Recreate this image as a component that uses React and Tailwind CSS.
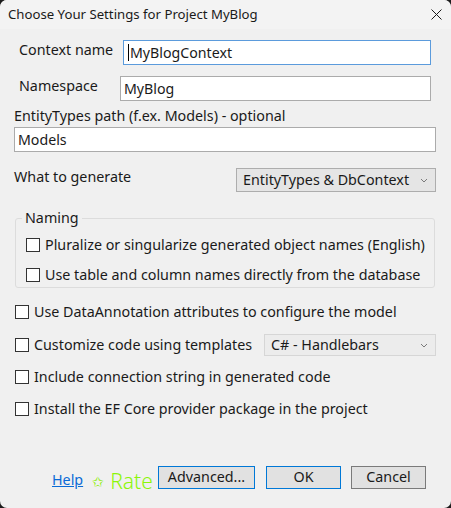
const font = { fontFamily: '"Noto Sans", "Open Sans", sans-serif' };

function Checkbox({ label }) {
  return (
    <label className="flex items-center gap-[5px] h-[20px]">
      <span className="w-[14px] h-[14px] border border-[#333333] bg-white shrink-0" />
      <span className="text-[14.3px] text-[#1a1a1a] leading-none whitespace-nowrap">{label}</span>
    </label>
  );
}

function Chevron() {
  return (
    <svg width="8" height="5" viewBox="0 0 8 5" className="shrink-0">
      <path d="M1 1 L4 4 L7 1" fill="none" stroke="#7a7a7a" strokeWidth="1" />
    </svg>
  );
}

export default function App() {
  return (
    <div className="w-[451px] h-[508px] bg-[#1c1c1c]" style={font}>
      <div className="w-full h-full bg-[#f0f0f0] rounded-[7px] overflow-hidden flex flex-col">
        <div className="h-[29px] bg-[#f3f3f3] flex items-center justify-between pl-[8px] pr-[9px] shrink-0">
          <span className="text-[13.2px] text-[#1a1a1a]">Choose Your Settings for Project MyBlog</span>
          <svg width="11" height="11" viewBox="0 0 11 11">
            <path d="M0.5 0.5 L10.5 10.5 M10.5 0.5 L0.5 10.5" stroke="#1a1a1a" strokeWidth="1" />
          </svg>
        </div>

        <div className="flex flex-col text-[#1a1a1a] text-[14.3px]">
          <div className="flex items-center mt-[11px] h-[25px]">
            <span className="ml-[19px] w-[104px] -mt-[6px]">Context name</span>
            <div className="w-[308px] h-[25px] bg-white border border-[#5b9bdc] flex items-center pl-[4px]">
              <span className="w-px h-[17px] bg-black" />
              <span className="text-[14.2px] ml-[1px]">MyBlogContext</span>
            </div>
          </div>

          <div className="flex items-center mt-[11px] h-[25px]">
            <span className="ml-[19px] w-[101px] -mt-[6px]">Namespace</span>
            <div className="w-[311px] h-[25px] bg-white border border-[#ababab] flex items-center pl-[3px]">
              <span className="text-[14.2px]">MyBlog</span>
            </div>
          </div>

          <div className="ml-[14px] mt-[3px] h-[23px] flex items-center">EntityTypes path (f.ex. Models) - optional</div>
          <div className="ml-[14px] w-[422px] h-[25px] bg-white border border-[#ababab] flex items-center pl-[3px]">
            <span className="text-[14.2px]">Models</span>
          </div>

          <div className="flex items-center mt-[16px] h-[24px]">
            <span className="ml-[14px] w-[222px] -mt-[6px]">What to generate</span>
            <div className="w-[200px] h-[24px] bg-[#e5e5e5] border border-[#adadad] flex items-center justify-between pl-[6px] pr-[7px]">
              <span className="text-[14.3px]">EntityTypes &amp; DbContext</span>
              <Chevron />
            </div>
          </div>

          <div className="relative ml-[15px] mt-[26px] w-[420px] h-[70px] border border-[#dcdcdc] rounded-[3px] flex flex-col pl-[10px] pt-[16px] gap-[10px]">
            <span className="absolute -top-[11px] left-[6px] px-[3px] bg-[#f0f0f0] text-[14.3px] leading-[20px]">Naming</span>
            <Checkbox label="Pluralize or singularize generated object names (English)" />
            <Checkbox label="Use table and column names directly from the database" />
          </div>

          <div className="ml-[15px] mt-[14px] flex flex-col">
            <Checkbox label="Use DataAnnotation attributes to configure the model" />
            <div className="flex items-center mt-[12px] h-[22px]">
              <div className="w-[249px]">
                <Checkbox label="Customize code using templates" />
              </div>
              <div className="w-[172px] h-[22px] bg-[#ececec] border border-[#d6d6d6] flex items-center justify-between pl-[6px] pr-[7px]">
                <span className="text-[14.3px]">C# - Handlebars</span>
                <Chevron />
              </div>
            </div>
            <div className="mt-[11px]">
              <Checkbox label="Include connection string in generated code" />
            </div>
            <div className="mt-[12px]">
              <Checkbox label="Install the EF Core provider package in the project" />
            </div>
          </div>

          <div className="flex items-center mt-[47px] h-[23px]">
            <div className="w-[158px] flex items-center shrink-0">
              <span className="ml-[52px] text-[14.3px] text-[#0a6ad6] underline mt-[4px]">Help</span>
              <span className="ml-[9px] text-[14px] leading-none text-[#88ee00] mt-[8px]">✩</span>
              <span className="ml-[6px] text-[21px] font-light text-[#8cf50a] leading-none mt-[7px]">Rate</span>
            </div>
            <button className="w-[97px] h-[23px] bg-[#e1e1e1] border border-[#0078d7] text-[14.3px] leading-none">Advanced...</button>
            <button className="ml-[11px] w-[75px] h-[23px] bg-[#e1e1e1] border border-[#0078d7] text-[14.3px] leading-none">OK</button>
            <button className="ml-[10px] w-[75px] h-[23px] bg-[#e1e1e1] border border-[#7a7a7a] text-[14.3px] leading-none">Cancel</button>
          </div>
        </div>
      </div>
    </div>
  );
}
